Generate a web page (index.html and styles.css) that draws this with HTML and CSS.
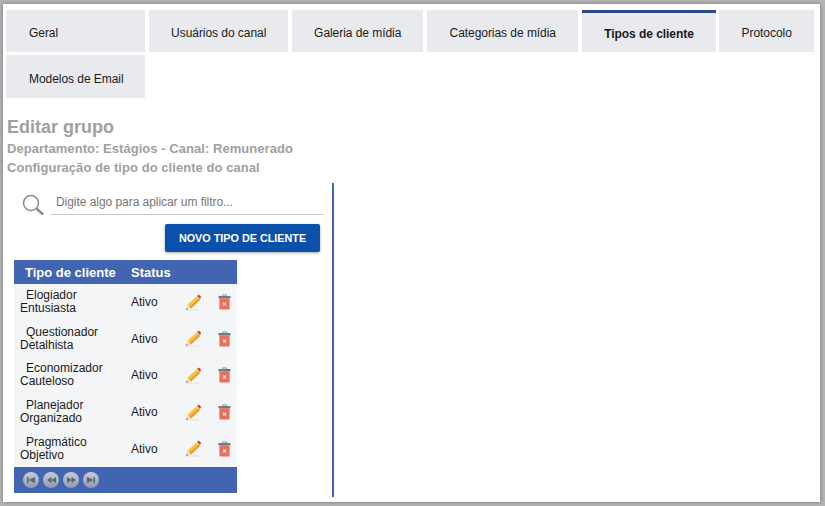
FILE: index.html
```html
<!DOCTYPE html>
<html lang="pt-BR">
<head>
    <meta charset="UTF-8">
    <meta name="viewport" content="width=device-width, initial-scale=1.0">
    <title>Tipos de cliente</title>
    <link rel="stylesheet" href="styles.css">
</head>
<body>
    <svg class="icon-defs" width="0" height="0">
        <symbol id="pencil" viewBox="0 0 18 17">
            <path d="M2 16h13" stroke="#dcdfe0" stroke-width="1"/>
            <path d="M3.500 10.500 12.500 2.500l3.500 3.500-9 8.500z" fill="#f9c346"/>
            <path d="M5.500 12.800 14.500 4.500l1.500 1.500-9 8.500z" fill="#ed9c2c"/>
            <path d="M13 2 14.800.6l2.400 2.400-1.300 2.100z" fill="#c9452f"/>
            <path d="M3.500 10.500 2 15.800l5-1.300z" fill="#f3dcb5"/>
            <path d="M2.500 14 2 15.800l1.900-.5z" fill="#555"/>
        </symbol>
        <symbol id="trash" viewBox="0 0 14 17">
            <path d="M5 2V.8h4V2" fill="none" stroke="#7f9aa0" stroke-width="1"/>
            <path d="M.5 2h13v2.500H.5z" fill="#66808a"/>
            <path d="M1.500 4.500h11v11.200q0 1-1 1h-9q-1 0-1-1z" fill="#e96f5c"/>
            <path d="m5.400 9 3.200 3.400m0-3.400-3.200 3.400" stroke="#fbe3de" stroke-width="1.300"/>
        </symbol>
    </svg>

    <div class="page">
        <nav class="tabs">
            <a class="tab tab-wide tab-left">Geral</a>
            <a class="tab tab-wide">Usuários do canal</a>
            <a class="tab">Galeria de mídia</a>
            <a class="tab">Categorias de mídia</a>
            <a class="tab active">Tipos de cliente</a>
            <a class="tab">Protocolo</a>
            <a class="tab tab-wide tab-left tab-second">Modelos de Email</a>
        </nav>

        <div class="titles">
            <h2>Editar grupo</h2>
            <h4>Departamento: Estágios - Canal: Remunerado</h4>
            <h4>Configuração de tipo do cliente do canal</h4>
        </div>

        <div class="panel">
            <div class="filter">
                <svg class="search-icon" width="23" height="22" viewBox="0 0 23 22">
                    <circle cx="9" cy="9" r="7.500" fill="none" stroke="#8a8a8a" stroke-width="1.500"/>
                    <path d="m14.500 14.500 6.500 6" stroke="#8a8a8a" stroke-width="2.500"/>
                </svg>
                <input class="filter-input" type="text" placeholder="Digite algo para aplicar um filtro...">
            </div>
            <div class="actions">
                <button class="btn-new">NOVO TIPO DE CLIENTE</button>
            </div>

            <table class="grid">
                <thead>
                    <tr>
                        <th class="col-name">Tipo de cliente</th>
                        <th class="col-status">Status</th>
                        <th class="col-edit"></th>
                        <th class="col-del"></th>
                    </tr>
                </thead>
                <tbody>
                    <tr>
                        <td class="col-name">Elogiador Entusiasta</td>
                        <td class="cell-status">Ativo</td>
                        <td><svg class="pencil"><use href="#pencil"/></svg></td>
                        <td><svg class="trash"><use href="#trash"/></svg></td>
                    </tr>
                    <tr>
                        <td class="col-name">Questionador Detalhista</td>
                        <td class="cell-status">Ativo</td>
                        <td><svg class="pencil"><use href="#pencil"/></svg></td>
                        <td><svg class="trash"><use href="#trash"/></svg></td>
                    </tr>
                    <tr>
                        <td class="col-name">Economizador Cauteloso</td>
                        <td class="cell-status">Ativo</td>
                        <td><svg class="pencil"><use href="#pencil"/></svg></td>
                        <td><svg class="trash"><use href="#trash"/></svg></td>
                    </tr>
                    <tr>
                        <td class="col-name">Planejador Organizado</td>
                        <td class="cell-status">Ativo</td>
                        <td><svg class="pencil"><use href="#pencil"/></svg></td>
                        <td><svg class="trash"><use href="#trash"/></svg></td>
                    </tr>
                    <tr>
                        <td class="col-name">Pragmático Objetivo</td>
                        <td class="cell-status">Ativo</td>
                        <td><svg class="pencil"><use href="#pencil"/></svg></td>
                        <td><svg class="trash"><use href="#trash"/></svg></td>
                    </tr>
                </tbody>
                <tfoot>
                    <tr>
                        <td colspan="4">
                            <div class="pager">
                                <span class="page-btn"><svg width="8" height="6" viewBox="0 0 8 6"><path d="M0 0h1.500v6H0zM8 0v6L1.500 3z"/></svg></span>
                                <span class="page-btn"><svg width="9" height="6" viewBox="0 0 9 6"><path d="M4.500 0v6L0 3zM9 0v6L4.500 3z"/></svg></span>
                                <span class="page-btn"><svg width="9" height="6" viewBox="0 0 9 6"><path d="M0 0v6l4.500-3zM4.500 0v6L9 3z"/></svg></span>
                                <span class="page-btn"><svg width="8" height="6" viewBox="0 0 8 6"><path d="M8 0H6.500v6H8zM0 0v6l6.500-3z"/></svg></span>
                            </div>
                        </td>
                    </tr>
                </tfoot>
            </table>
        </div>
    </div>
</body>
</html>
```

FILE: styles.css
```css
html, body {
    margin: 0;
    height: 100%;
}

body {
    font-family: "Liberation Sans", Arial, sans-serif;
    font-size: 12px;
    color: #1a1a1a;
    background-color: #b4b4b4;
    overflow: hidden;
}

.icon-defs {
    position: absolute;
}

.page {
    box-sizing: border-box;
    height: 498px;
    margin: 4px 5px 0 3px;
    padding: 6px 0 0 3px;
    background-color: white;
    box-shadow: 0 0 4px rgba(0,0,0,0.35);
}

.tabs {
    display: flex;
    flex-wrap: wrap;
    gap: 3px 4px;
}

.tab {
    box-sizing: border-box;
    height: 42px;
    line-height: 46px;
    padding: 0 22.100px;
    text-align: center;
    white-space: nowrap;
    letter-spacing: -0.05px;
    background-color: #e9eaee;
}

.tab-wide {
    width: 139px;
}

.tab-left {
    text-align: left;
    padding-left: 23px;
}

.tab-second {
    height: 43px;
    line-height: 48px;
}

.tab.active {
    margin-right: -0.500px;
    font-weight: bold;
    letter-spacing: -0.05px;
    border-top: 3px solid #2b4a85;
    line-height: 43px;
}

.titles {
    margin-top: 18px;
    color: #a0a0a0;
}

.titles h2 {
    margin: 0 0 1px;
    font-size: 18px;
    line-height: 22px;
    padding-left: 1px;
}

.titles h4 {
    margin: 0;
    font-size: 13px;
    line-height: 19px;
    letter-spacing: 0.05px;
    padding-left: 1px;
}

.panel {
    box-sizing: border-box;
    width: 328px;
    height: 314px;
    margin-top: 6px;
    border-right: 2px solid #4165b0;
}

.filter {
    display: flex;
    align-items: center;
    height: 32px;
    padding-left: 16px;
    margin-right: 8px;
}

.search-icon {
    margin-top: 12px;
}

.filter-input {
    flex: 1;
    box-sizing: border-box;
    height: 24px;
    margin: 8px 0 0 6px;
    padding: 0 0 2px 5px;
    border: none;
    border-bottom: 1px solid #c8c8c8;
    outline: none;
    font-family: inherit;
    font-size: 12px;
    letter-spacing: -0.05px;
}

.filter-input::placeholder {
    color: #777;
    opacity: 1;
}

.actions {
    display: flex;
    justify-content: flex-end;
    margin: 9px 12px 8px 0;
}

.btn-new {
    width: 155px;
    height: 28px;
    padding: 0;
    border: none;
    border-radius: 2px;
    background-color: #0b51ab;
    color: white;
    font-family: inherit;
    font-size: 10.800px;
    font-weight: bold;
    box-shadow: 0 1px 3px rgba(0,0,0,0.35);
}

.grid {
    width: 223px;
    margin-left: 8px;
    border-collapse: collapse;
    table-layout: fixed;
    background-color: #f4f5f7;
}

.grid th {
    height: 24px;
    padding: 0;
    background-color: #4165b0;
    color: white;
    font-size: 13px;
    text-align: left;
}

.grid th.col-name {
    padding-left: 11px;
}

.grid td {
    box-sizing: border-box;
    height: 36.600px;
    padding: 0;
    line-height: 13px;
}

.grid td.cell-status {
    padding-top: 1px;
}

.col-name {
    width: 106px;
}

.col-status {
    width: 54px;
}

.col-edit {
    width: 32px;
}

td.col-name {
    padding-left: 6px !important;
    padding-right: 12px !important;
    text-indent: 6px;
}

.pencil {
    display: block;
    width: 18px;
    height: 17px;
    margin-left: -1px;
}

.trash {
    display: block;
    width: 13px;
    height: 16px;
    margin-left: 1px;
}

.grid tfoot td {
    height: 26px;
    background-color: #4165b0;
}

.pager {
    display: flex;
    gap: 4px;
    padding-left: 9px;
}

.page-btn {
    display: flex;
    align-items: center;
    justify-content: center;
    width: 16px;
    height: 16px;
    border-radius: 50%;
    background: linear-gradient(#c9ccd4, #8f98ab);
    fill: #5a6478;
}
```
